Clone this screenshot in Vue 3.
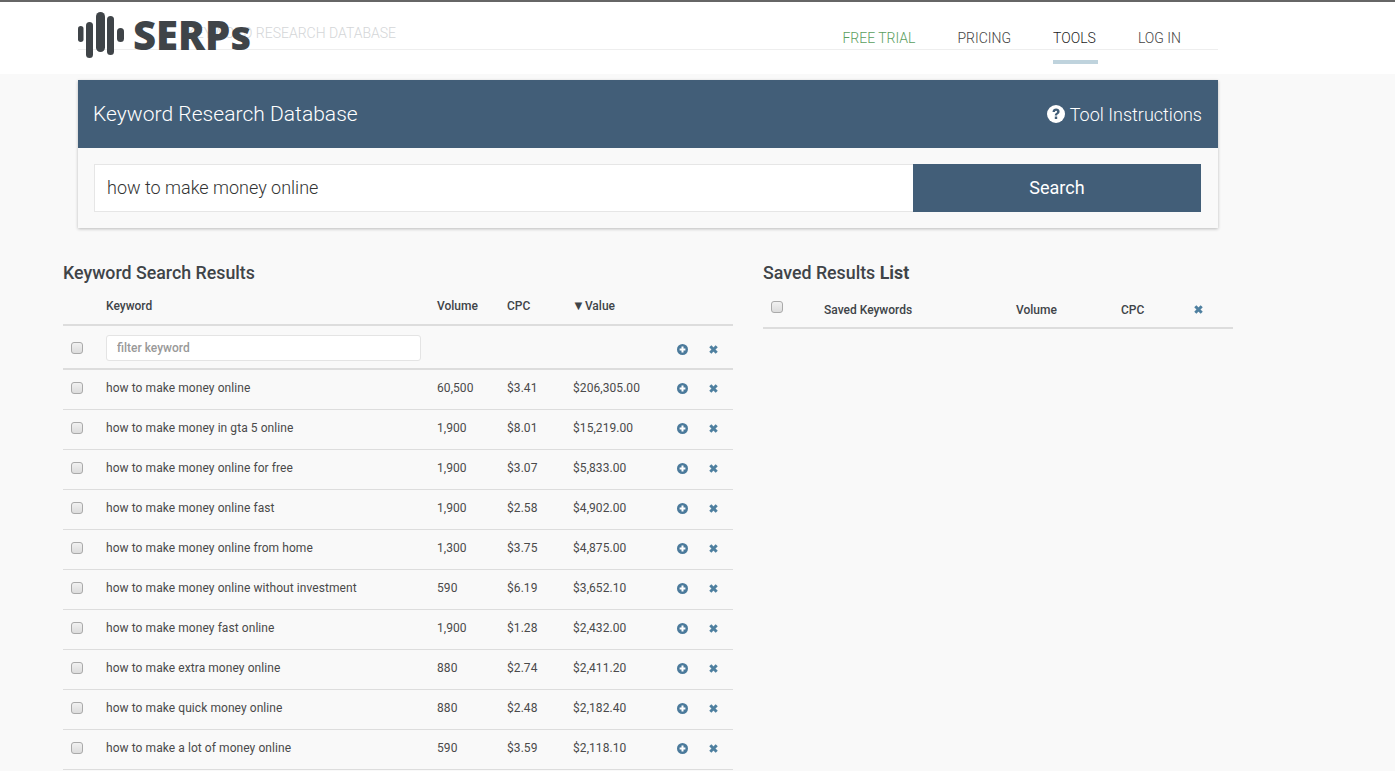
<script setup>
const nav = [
  { label: 'FREE TRIAL', cls: 'green' },
  { label: 'PRICING', cls: '' },
  { label: 'TOOLS', cls: 'active' },
  { label: 'LOG IN', cls: '' },
]
const rows = [
  ['how to make money online', '60,500', '$3.41', '$206,305.00'],
  ['how to make money in gta 5 online', '1,900', '$8.01', '$15,219.00'],
  ['how to make money online for free', '1,900', '$3.07', '$5,833.00'],
  ['how to make money online fast', '1,900', '$2.58', '$4,902.00'],
  ['how to make money online from home', '1,300', '$3.75', '$4,875.00'],
  ['how to make money online without investment', '590', '$6.19', '$3,652.10'],
  ['how to make money fast online', '1,900', '$1.28', '$2,432.00'],
  ['how to make extra money online', '880', '$2.74', '$2,411.20'],
  ['how to make quick money online', '880', '$2.48', '$2,182.40'],
  ['how to make a lot of money online', '590', '$3.59', '$2,118.10'],
]
</script>

<template>
  <div class="page">
    <header class="top">
      <div class="top-inner">
        <div class="crumb">KEYWORD RESEARCH DATABASE</div>
        <nav class="nav">
          <a v-for="n in nav" :key="n.label" class="nav-link" :class="n.cls">{{ n.label }}</a>
        </nav>
        <div class="logo">
          <svg class="logo-mark" width="48" height="46" viewBox="0 0 48 46">
            <g fill="#3f4448">
              <rect x="0" y="14" width="5.500" height="16" rx="2.750" />
              <rect x="8" y="10" width="7" height="36" rx="3.500" />
              <rect x="18" y="0" width="9" height="40" rx="4.500" />
              <rect x="29" y="4" width="7" height="39" rx="3.500" />
              <rect x="39" y="16" width="7" height="14" rx="3.500" />
            </g>
          </svg>
          <span class="logo-text">SERPs</span>
        </div>
      </div>
    </header>

    <section class="card">
      <div class="card-head">
        <h1>Keyword Research Database</h1>
        <a class="instructions">
          <svg width="18" height="18" viewBox="0 0 18 18">
            <circle cx="9" cy="9" r="9" fill="#fff" />
            <path d="M5.500 6.900C5.600 4.800 7.200 3.600 9.100 3.600c2 0 3.500 1.200 3.500 3 0 1.400-.9 2.100-1.700 2.600-.6.400-.8.600-.8 1.300H7.800c0-1.400.5-2.100 1.300-2.600.7-.4 1-.7 1-1.200 0-.6-.4-.9-1-.9-.7 0-1.100.4-1.200 1.100z" fill="#425e78" />
            <rect x="7.800" y="11.500" width="2.400" height="2.500" fill="#425e78" />
          </svg>
          <span>Tool Instructions</span>
        </a>
      </div>
      <div class="search">
        <input class="search-input" value="how to make money online" />
        <button class="search-btn">Search</button>
      </div>
    </section>

    <div class="columns">
      <div class="results">
        <h2>Keyword Search Results</h2>
        <table class="tbl">
          <colgroup>
            <col class="w-check" /><col class="w-key" /><col class="w-vol" /><col class="w-cpc" /><col class="w-val" /><col class="w-ic" /><col class="w-ic" />
          </colgroup>
          <thead>
            <tr class="head-row">
              <th></th><th>Keyword</th><th>Volume</th><th>CPC</th><th><span class="tri">▼</span>Value</th><th></th><th></th>
            </tr>
          </thead>
          <tbody>
            <tr class="filter-row">
              <td class="c"><input type="checkbox" class="cb" /></td>
              <td><input class="filter" placeholder="filter keyword" /></td>
              <td></td><td></td><td></td>
              <td class="ic low">
                <svg class="plus" width="11" height="11" viewBox="0 0 11 11"><circle cx="5.500" cy="5.500" r="5.500" /><path d="M5.500 2.600v5.800M2.600 5.500h5.800" /></svg>
              </td>
              <td class="ic low">
                <svg class="x" width="9" height="9" viewBox="0 0 9 9"><path d="M1.300 1.300l6.400 6.400M7.700 1.300L1.300 7.700" /></svg>
              </td>
            </tr>
            <tr v-for="r in rows" :key="r[0]" class="row">
              <td class="c"><input type="checkbox" class="cb" /></td>
              <td>{{ r[0] }}</td>
              <td>{{ r[1] }}</td>
              <td>{{ r[2] }}</td>
              <td>{{ r[3] }}</td>
              <td class="ic">
                <svg class="plus" width="11" height="11" viewBox="0 0 11 11"><circle cx="5.500" cy="5.500" r="5.500" /><path d="M5.500 2.600v5.800M2.600 5.500h5.800" /></svg>
              </td>
              <td class="ic">
                <svg class="x" width="9" height="9" viewBox="0 0 9 9"><path d="M1.300 1.300l6.400 6.400M7.700 1.300L1.300 7.700" /></svg>
              </td>
            </tr>
          </tbody>
        </table>
      </div>

      <div class="saved">
        <h2>Saved Results <b>List</b></h2>
        <div class="saved-head">
          <input type="checkbox" class="cb" />
          <span class="sk">Saved Keywords</span>
          <span class="sv">Volume</span>
          <span class="sc">CPC</span>
          <svg class="x" width="9" height="9" viewBox="0 0 9 9"><path d="M1.300 1.300l6.400 6.400M7.700 1.300L1.300 7.700" /></svg>
        </div>
      </div>
    </div>
  </div>
</template>

<style>
html, body { margin: 0; background: #f9f9f9; overflow: hidden; }
</style>

<style scoped>
.page {
  height: 771px;
  overflow: hidden;
  background: #f9f9f9;
  font-family: Roboto, "Liberation Sans", sans-serif;
  color: #3f4448;
  box-sizing: border-box;
}
.top {
  height: 74px;
  box-sizing: border-box;
  background: #fff;
  border-top: 2px solid #666;
}
.top-inner {
  position: relative;
  width: 1140px;
  height: 47px;
  margin-left: 78px;
  border-bottom: 1px solid #eee;
  display: flex;
  justify-content: space-between;
}
.crumb {
  margin: 23px 0 0 109px;
  font-size: 14px;
  line-height: 16px;
  font-weight: 300;
  color: #d4d6d8;
}
.nav {
  display: flex;
  gap: 42px;
  margin-right: 37px;
  padding-top: 28px;
}
.nav-link {
  position: relative;
  font-size: 14px;
  line-height: 16px;
  font-weight: 300;
  color: #444;
}
.nav-link.green { color: #5a9e5e; }
.nav-link.active { color: #222; }
.nav-link.active::after {
  content: "";
  position: absolute;
  left: 0;
  right: -2px;
  top: 30px;
  height: 4px;
  background: #bfd3dd;
}
.logo {
  position: absolute;
  left: 0;
  top: 10px;
  display: flex;
  align-items: center;
  gap: 7px;
}
.logo-mark { display: block; }
.logo-text {
  font-family: "Open Sans", sans-serif;
  font-weight: 800;
  font-size: 40px;
  line-height: 46px;
  color: #3f4448;
}
.card {
  width: 1140px;
  height: 148px;
  margin: 6px 0 0 78px;
  background: #f9f9f9;
  box-shadow: 0 1px 3px rgba(0, 0, 0, .25);
}
.card-head {
  height: 68px;
  background: #425e78;
  color: #fff;
  display: flex;
  align-items: center;
  justify-content: space-between;
  padding: 0 16px 0 15px;
}
.card-head h1 {
  margin: 0;
  font-size: 21px;
  font-weight: 300;
  letter-spacing: .04px;
}
.instructions {
  display: flex;
  align-items: center;
  gap: 5px;
  font-size: 18px;
  font-weight: 300;
}
.search {
  display: flex;
  padding: 16px 17px 0 16px;
}
.search-input {
  width: 819px;
  height: 48px;
  box-sizing: border-box;
  border: 1px solid #e6e6e6;
  border-right: 0;
  background: #fff;
  padding: 0 12px 2px;
  font: 300 18px Roboto, sans-serif;
  color: #333;
  outline: none;
}
.search-btn {
  width: 288px;
  height: 48px;
  border: 0;
  padding: 0 0 2px;
  background: #425e78;
  color: #fff;
  font: 400 18px Roboto, sans-serif;
}
.columns {
  display: flex;
  gap: 30px;
  margin: 33px 0 0 63px;
}
.results { width: 670px; }
.saved { width: 470px; }
h2 {
  margin: 0;
  font-size: 17.800px;
  line-height: 24px;
  font-weight: 500;
  color: #3f4448;
}
h2 b { font-weight: 700; }
.tbl {
  width: 670px;
  table-layout: fixed;
  border-collapse: collapse;
  font-size: 12px;
  letter-spacing: .07px;
  color: #4a4a4a;
}
.w-check { width: 43px; }
.w-key { width: 331px; }
.w-vol { width: 70px; }
.w-cpc { width: 66px; }
.w-val { width: 92px; }
.w-ic { width: 34px; }
.tbl th {
  height: 37px;
  padding: 2px 0 0;
  text-align: left;
  font-weight: 500;
  color: #3f4448;
  letter-spacing: 0;
}
.tbl td { padding: 0; }
.tri { font-size: 13px; line-height: 1; margin-left: -1px; }
.head-row { border-bottom: 2px solid #ddd; }
.filter-row { height: 44px; border-bottom: 2px solid #ddd; }
.tbl .filter-row td { padding-top: 1px; }
.row { height: 40px; border-bottom: 1px solid #ddd; }
.tbl .row td { height: 36px; padding-bottom: 3px; }
.tbl .c { padding-left: 8px; }
.cb {
  appearance: none;
  display: block;
  box-sizing: border-box;
  width: 12px;
  height: 12px;
  margin: 0;
  border: 1px solid #aaa;
  border-radius: 3px;
  background: linear-gradient(#f1f1f1, #dcdcdc);
}
.filter {
  width: 315px;
  height: 26px;
  box-sizing: border-box;
  border: 1px solid #e4e4e4;
  border-radius: 3px;
  background: #fff;
  padding: 0 10px;
  font: 500 12px Roboto, sans-serif;
  display: block;
  outline: none;
}
.filter::placeholder { color: #999; opacity: 1; }
.ic svg { display: block; margin-left: 12px; }
.ic .x { margin-left: 10px; }
.low svg { position: relative; top: 2px; }
.plus circle { fill: #4b7a9b; }
.plus path { stroke: #fff; stroke-width: 2; fill: none; }
.x path { stroke: #4f80a0; stroke-width: 3; fill: none; }
.saved-head {
  height: 44px;
  box-sizing: border-box;
  padding-top: 7px;
  display: flex;
  align-items: center;
  border-bottom: 2px solid #ddd;
  font-size: 12px;
  font-weight: 500;
  color: #3f4448;
}
.saved-head .cb { margin-left: 8px; position: relative; top: -3px; }
.sk { margin-left: 41px; width: 192px; }
.sv { width: 105px; }
.sc { width: 73px; }
</style>
